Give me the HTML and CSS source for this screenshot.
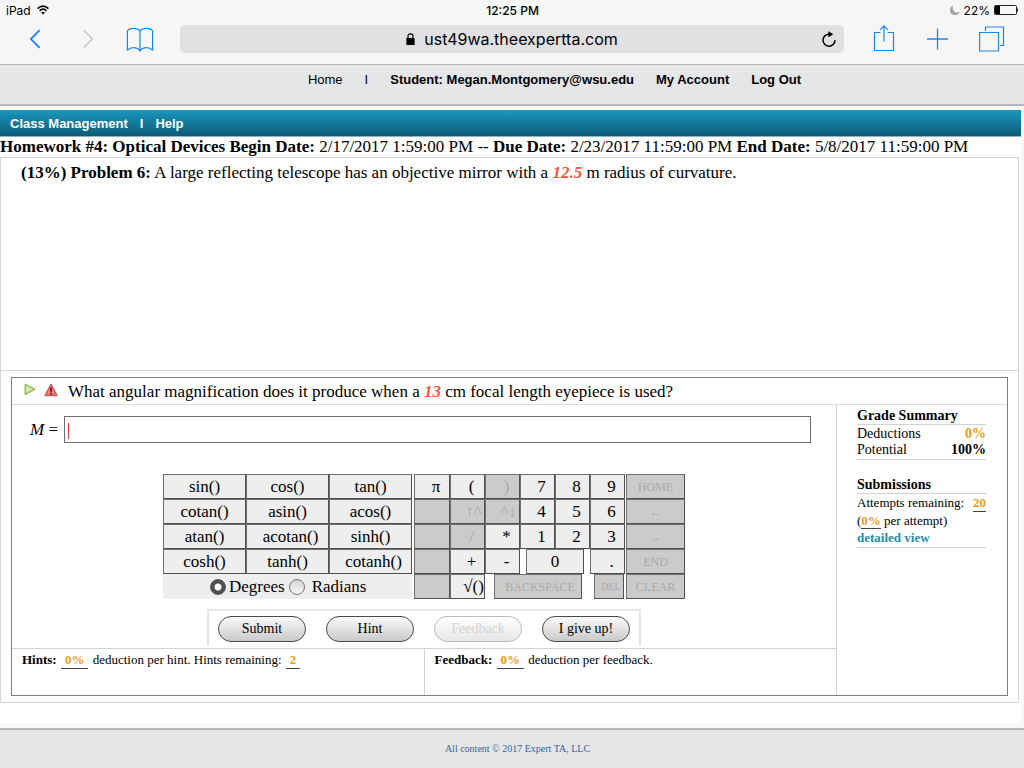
FILE: index.html
```html
<!DOCTYPE html>
<html lang="en">
<head>
    <meta charset="UTF-8">
    <meta name="viewport" content="width=device-width, initial-scale=1.0">
    <title>Expert TA - Homework #4</title>
    <link rel="stylesheet" href="styles.css">
</head>
<body>
    <div class="browser">
        <div class="status">
            <div class="status-left">
                <span>iPad</span>
                <svg width="12" height="10" viewBox="0 0 12 10" fill="none" stroke="#000" stroke-width="1.6">
                    <path d="M0.6 3.6 Q6 -1.4 11.4 3.6"/>
                    <path d="M2.6 5.8 Q6 2.6 9.4 5.8"/>
                    <path d="M6 9.6 L4 7.6 Q6 5.9 8 7.6 Z" fill="#000" stroke="none"/>
                </svg>
            </div>
            <div class="status-time">12:25 PM</div>
            <div class="status-right">
                <svg width="10" height="10" viewBox="0 0 10 10"><path d="M3.4 0.4 A5 5 0 1 0 9.6 6.8 A4.6 4.6 0 0 1 3.4 0.4 Z" fill="#a5a5a5"/></svg>
                <span>22%</span>
                <svg width="25" height="10" viewBox="0 0 25 10">
                    <rect x="0.5" y="0.5" width="22" height="9" rx="1" fill="none" stroke="#222"/>
                    <rect x="1" y="1" width="5" height="8" fill="#000"/>
                    <path d="M23 3 Q25 5 23 7 Z" fill="#000"/>
                </svg>
            </div>
        </div>
        <div class="toolbar">
            <div class="tools tools-left">
                <button type="button" aria-label="Back"><svg width="12" height="20" viewBox="0 0 12 20" fill="none" stroke="#0a7aff" stroke-width="1.7"><path d="M9.6 1.2 L0.9 10 L9.6 18.8"/></svg></button>
                <button type="button" aria-label="Forward"><svg width="12" height="20" viewBox="0 0 12 20" fill="none" stroke="#c6c6c8" stroke-width="1.5"><path d="M1.6 1.2 L10.4 10 L1.6 18.8"/></svg></button>
                <button type="button" aria-label="Bookmarks"><svg width="28" height="26" viewBox="0 0 28 26" fill="none" stroke="#1b85e8" stroke-width="1.2">
                    <path d="M14 5 Q12 2.4 7.5 2.4 Q3.4 2.4 1.4 4.6 V24 Q4 21.6 7.5 21.6 Q12 21.6 14 25 Q16 21.6 20.5 21.6 Q24 21.6 26.6 24 V4.6 Q24.6 2.4 20.5 2.4 Q16 2.4 14 5 V25"/>
                </svg></button>
            </div>
            <div class="address">
                <div class="url">
                    <svg width="9" height="12" viewBox="0 0 9 12"><rect x="0.4" y="5" width="8.2" height="7" rx="0.6" fill="#000"/><path d="M2 5.5 V3 Q2 0.8 4.5 0.8 Q7 0.8 7 3 V5.5" fill="none" stroke="#000" stroke-width="1.2"/></svg>
                    <span>ust49wa.theexpertta.com</span>
                </div>
                <button type="button" aria-label="Reload"><svg width="16" height="17" viewBox="0 0 16 17"><path d="M8.5 3.2 A6 6 0 1 0 14 9.2" fill="none" stroke="#000" stroke-width="1.5"/><path d="M7.4 0.2 L12.2 3.2 L7.4 6.2 Z" fill="#000"/></svg></button>
            </div>
            <div class="tools tools-right">
                <button type="button" aria-label="Share"><svg width="22" height="28" viewBox="0 0 22 28" fill="none" stroke="#1b85e8" stroke-width="1.2"><path d="M7.5 7.5 H1.5 V25.5 H20.5 V7.5 H14.5 M11 16.5 V0.9 M7 4.9 L11 0.9 L15 4.9"/></svg></button>
                <button type="button" aria-label="New tab"><svg width="22" height="22" viewBox="0 0 22 22" stroke="#1b85e8" stroke-width="1.3"><path d="M10.5 0.5 V21.5 M0 11 H21"/></svg></button>
                <button type="button" aria-label="Tabs"><svg width="26" height="26" viewBox="0 0 26 26" fill="none" stroke="#1b85e8" stroke-width="1.2"><path d="M0.6 6.5 H19.5 V25 H0.6 Z M6.5 5 V1 H24.5 V19.5 H21"/></svg></button>
            </div>
        </div>
    </div>

    <div class="top-links">
        <a href="#" class="plain">Home</a>
        <span class="plain">I</span>
        <a href="#">Student: Megan.Montgomery@wsu.edu</a>
        <a href="#">My Account</a>
        <a href="#">Log Out</a>
    </div>

    <div class="page">
        <div class="nav">
            <a href="#">Class Management</a>
            <span>I</span>
            <a href="#">Help</a>
        </div>
        <div class="homework">
            <b>Homework #4: Optical Devices</b>
            <b>Begin Date:</b> 2/17/2017 1:59:00 PM --
            <b>Due Date:</b> 2/23/2017 11:59:00 PM
            <b>End Date:</b> 5/8/2017 11:59:00 PM
        </div>

        <div class="assignment">
            <div class="statement">
                <b>(13%) Problem 6:</b> A large reflecting telescope has an objective mirror with a <em>12.5</em> m radius of curvature.
            </div>
            <div class="question">
                <div class="question-head">
                    <svg width="12" height="13" viewBox="0 0 12 13"><path d="M1.2 1.2 L10.8 6.2 L1.2 11.4 Z" fill="#d3e8a4" stroke="#8fb04a" stroke-width="1.2" stroke-linejoin="round"/></svg>
                    <svg width="14" height="14" viewBox="0 0 14 14"><path d="M7 1.4 L12.8 12.4 H1.2 Z" fill="#f08080" stroke="#d85c5c" stroke-width="1.6" stroke-linejoin="round"/><path d="M7 4.4 V8.8 M7 9.8 V11.4" stroke="#5a1010" stroke-width="1.6"/></svg>
                    <p>What angular magnification does it produce when a <em>13</em> cm focal length eyepiece is used?</p>
                </div>
                <div class="question-body">
                    <div class="work">
                        <div class="answer">
                            <label for="answer"><i>M</i> =</label>
                            <div class="field">
                                <input type="text" id="answer">
                                <span class="caret"></span>
                            </div>
                        </div>

                        <div class="keypad">
                            <div class="functions">
                                <button type="button">sin()</button>
                                <button type="button">cos()</button>
                                <button type="button">tan()</button>
                                <button type="button">cotan()</button>
                                <button type="button">asin()</button>
                                <button type="button">acos()</button>
                                <button type="button">atan()</button>
                                <button type="button" class="long">acotan()</button>
                                <button type="button">sinh()</button>
                                <button type="button">cosh()</button>
                                <button type="button">tanh()</button>
                                <button type="button" class="long">cotanh()</button>
                                <div class="mode">
                                    <input type="radio" name="mode" id="degrees" checked>
                                    <label for="degrees">Degrees</label>
                                    <input type="radio" name="mode" id="radians">
                                    <label for="radians">Radians</label>
                                </div>
                            </div>
                            <div class="numbers">
                                <div class="row">
                                    <button type="button">π</button>
                                    <button type="button">(</button>
                                    <button type="button" disabled>)</button>
                                    <button type="button">7</button>
                                    <button type="button">8</button>
                                    <button type="button">9</button>
                                    <button type="button" class="side-key" disabled>HOME</button>
                                </div>
                                <div class="row">
                                    <button type="button" aria-label="blank" disabled></button>
                                    <button type="button" class="wide-text" disabled>↑^</button>
                                    <button type="button" class="wide-text" disabled>^↓</button>
                                    <button type="button">4</button>
                                    <button type="button">5</button>
                                    <button type="button">6</button>
                                    <button type="button" class="side-key" disabled>←</button>
                                </div>
                                <div class="row">
                                    <button type="button" aria-label="blank" disabled></button>
                                    <button type="button" disabled>/</button>
                                    <button type="button">*</button>
                                    <button type="button">1</button>
                                    <button type="button">2</button>
                                    <button type="button">3</button>
                                    <button type="button" class="side-key" disabled>→</button>
                                </div>
                                <div class="row">
                                    <button type="button" aria-label="blank" disabled></button>
                                    <button type="button">+</button>
                                    <button type="button">-</button>
                                    <button type="button" class="zero">0</button>
                                    <button type="button">.</button>
                                    <button type="button" class="side-key" disabled>END</button>
                                </div>
                                <div class="row">
                                    <button type="button" aria-label="blank" disabled></button>
                                    <button type="button" class="root">√()</button>
                                    <button type="button" class="backspace" disabled>BACKSPACE</button>
                                    <button type="button" class="del" disabled>DEL</button>
                                    <button type="button" class="side-key" disabled>CLEAR</button>
                                </div>
                            </div>
                        </div>

                        <div class="actions">
                            <button type="button">Submit</button>
                            <button type="button">Hint</button>
                            <button type="button" disabled>Feedback</button>
                            <button type="button">I give up!</button>
                        </div>

                        <div class="notes">
                            <div class="note"><b>Hints:</b> <span class="value">0%</span> deduction per hint. Hints remaining: <span class="value">2</span></div>
                            <div class="note"><b>Feedback:</b> <span class="value">0%</span> deduction per feedback.</div>
                        </div>
                    </div>

                    <div class="summary">
                        <h3>Grade Summary</h3>
                        <div class="group">
                            <div class="line"><span>Deductions</span><b class="orange">0%</b></div>
                            <div class="line"><span>Potential</span><b>100%</b></div>
                        </div>
                        <h3>Submissions</h3>
                        <div class="group attempts">
                            <div class="line"><span>Attempts remaining:</span><b class="orange underlined">20</b></div>
                            <div>(<b class="orange underlined">0%</b> per attempt)</div>
                            <a href="#">detailed view</a>
                        </div>
                    </div>
                </div>
            </div>
        </div>
    </div>

    <div class="footer"><a href="#">All content © 2017 Expert TA, LLC</a></div>
</body>
</html>
```
FILE: styles.css
```css
* {
    box-sizing: border-box;
}
body {
    margin: 0;
    min-height: 100vh;
    display: flex;
    flex-direction: column;
    background-color: #f8f8f8;
    font-family: "Liberation Serif", "Times New Roman", serif;
    font-size: 17px;
    color: #000;
}
button, input {
    font-family: inherit;
    color: inherit;
    margin: 0;
}
a {
    color: inherit;
    text-decoration: none;
}
em {
    color: #f4553d;
    font-weight: bold;
}

/* browser bar */
.browser {
    background-color: #f6f6f6;
    border-bottom: 1px solid #b4b5b7;
    font-family: Inter, "Liberation Sans", sans-serif;
}
.status {
    height: 20px;
    padding: 0 5px 0 6px;
    display: flex;
    align-items: center;
    font-size: 12px;
}
.status-left, .status-right {
    flex: 1;
    display: flex;
    align-items: center;
    gap: 6px;
}
.status-right {
    justify-content: flex-end;
    gap: 4px;
}
.status-time {
    font-weight: 500;
}
.toolbar {
    height: 44px;
    padding-bottom: 6px;
    display: flex;
    align-items: center;
}
.toolbar button {
    border: none;
    background: none;
    padding: 0;
    display: flex;
    justify-content: center;
    align-items: center;
}
.tools {
    width: 180px;
    display: flex;
}
.tools-left {
    padding-left: 10px;
}
.tools-left button {
    width: 52px;
}
.tools-right {
    padding-right: 5px;
    justify-content: flex-end;
}
.tools-right button {
    width: 54px;
}
.address {
    flex: 1;
    height: 28px;
    padding: 0 7px 0 23px;
    border-radius: 5px;
    background-color: #e1e1e3;
    display: flex;
    align-items: center;
}
.url {
    flex: 1;
    display: flex;
    justify-content: center;
    align-items: center;
    gap: 9px;
    font-size: 16px;
}

/* page header */
.top-links {
    height: 41px;
    padding: 7px 0 0 85px;
    display: flex;
    justify-content: center;
    gap: 22px;
    background-color: #e5e6e8;
    border-bottom: 2px solid #b6b7b8;
    font-family: "Liberation Sans", Arial, sans-serif;
    font-size: 13px;
    font-weight: bold;
    line-height: 16px;
}
.top-links .plain {
    font-weight: normal;
}
.page {
    margin-right: 3px;
    padding-bottom: 20px;
    background-color: #fff;
    border-top: 4px solid #f8f8f8;
    border-bottom: 5px solid #f8f8f8;
}
.nav {
    height: 27px;
    padding: 0 10px;
    display: flex;
    align-items: center;
    gap: 12px;
    background: linear-gradient(#1a98bd, #0d5b75);
    border-bottom: 1px solid #8fb3bf;
    color: #fff;
    font-family: "Liberation Sans", Arial, sans-serif;
    font-size: 13px;
    font-weight: bold;
}
.homework {
    height: 20px;
    line-height: 20px;
    white-space: nowrap;
}
.assignment {
    margin-right: 2px;
    padding-bottom: 6px;
    border: 1px solid #d6d6d6;
}
.statement {
    min-height: 213px;
    padding: 5px 20px;
    line-height: 20px;
    border-bottom: 1px solid #d6d6d6;
}
.question {
    margin: 6px 10px 0;
    border: 1px solid #7d7d7d;
}
.question-head {
    height: 27px;
    padding: 0 12px;
    display: flex;
    gap: 8px;
    border-bottom: 1px solid #dedede;
}
.question-head svg {
    margin-top: 5px;
}
.question-head p {
    margin: 0 2px;
    line-height: 28px;
}
.question-body {
    display: flex;
}
.work {
    flex: 1;
    border-right: 1px solid #d2d2d2;
}
.answer {
    padding: 11px 25px 0 18px;
    display: flex;
    align-items: center;
    gap: 6px;
}
.field {
    flex: 1;
    position: relative;
}
.field input {
    display: block;
    width: 100%;
    height: 27px;
    padding: 0 6px;
    border: 1px solid #6f6f6f;
    font-size: 17px;
}
.caret {
    position: absolute;
    top: 7px;
    left: 4px;
    width: 1px;
    height: 16px;
    background-color: #e8383d;
}

/* keypad */
.keypad {
    margin-top: 31px;
    display: flex;
    justify-content: center;
    gap: 2px;
}
.keypad button {
    height: 25px;
    padding: 0;
    border: 1px solid #505050;
    border-top-color: #707070;
    border-left-color: #707070;
    border-radius: 0;
    background-color: #eee;
    font-size: 17px;
    line-height: 22px;
}
.keypad button:disabled {
    background-color: #cbcbcb;
    color: #a9a9a9;
}
.functions {
    display: grid;
    grid-template-columns: repeat(3, 83px);
}
.functions .long {
    padding-left: 6px;
}
.mode {
    grid-column: 1 / 4;
    height: 25px;
    padding-left: 47px;
    display: flex;
    align-items: center;
    background-color: #eee;
}
.mode input {
    appearance: none;
    width: 16px;
    height: 16px;
    margin-right: 3px;
    border: 1px solid #777;
    border-radius: 50%;
    background: linear-gradient(#d2d2d2, #fafafa);
}
.mode input:checked {
    background: radial-gradient(circle, #fff 3px, #505050 4px);
    border-color: #555;
}
.mode label {
    margin-right: 4px;
}
.mode input:last-of-type {
    margin-right: 7px;
}
.numbers {
    width: 271px;
}
.row {
    display: flex;
}
.row button {
    width: 35px;
    padding-left: 8px;
}
.row button:first-child {
    width: 36px;
}
.row .wide-text {
    padding-left: 12px;
}
.row .side-key {
    width: 59px;
    margin-left: auto;
    padding: 0;
    font-size: 12px;
}
.row .zero {
    width: 58px;
    margin: 0 6px;
    padding: 0;
}
.row .root {
    padding-left: 12px;
}
.row .backspace {
    width: 88px;
    margin-left: 9px;
    padding: 0 0 0 4px;
    font-size: 12px;
}
.row .del {
    width: 30px;
    margin-left: 12px;
    padding: 0 0 0 4px;
    font-size: 10px;
}

/* submit buttons */
.actions {
    width: 434px;
    height: 37px;
    margin: 10px auto 2px;
    padding: 5px 9px;
    display: flex;
    justify-content: space-between;
    border: solid #e6e6e6;
    border-width: 2px 2px 0;
}
.actions button {
    width: 88px;
    height: 26px;
    padding: 0;
    border: 1px solid #4a4a4a;
    border-radius: 13px;
    background: linear-gradient(#fafafa, #cacaca);
    font-size: 14px;
}
.actions button:disabled {
    border-color: #bbb;
    background: linear-gradient(#fff, #e6e6e6);
    color: #d2d2d2;
}
.notes {
    display: flex;
    border-top: 1px solid #d2d2d2;
    font-size: 13px;
    line-height: 16px;
}
.note {
    flex: 1;
    height: 46px;
    padding: 3px 10px;
}
.note + .note {
    border-left: 1px solid #d2d2d2;
}
.value {
    display: inline-block;
    margin: 0 1px;
    padding: 0 4px;
    border-bottom: 1px solid #444;
    color: #f39a14;
    font-weight: bold;
}

/* grade summary */
.summary {
    width: 170px;
    padding: 3px 21px 0 20px;
    font-size: 14px;
    line-height: 16px;
}
.summary h3 {
    margin: 0;
    font-size: 14px;
    border-bottom: 1px solid #d2d2d2;
}
.summary .group {
    margin-bottom: 17px;
    padding: 1px 0;
    border-bottom: 1px solid #d2d2d2;
}
.summary .attempts {
    font-size: 13px;
}
.attempts div {
    margin-bottom: 1px;
}
.line {
    display: flex;
    justify-content: space-between;
}
.orange {
    color: #f39a14;
}
.underlined {
    border-bottom: 1px solid #444;
}
.summary a {
    color: #1c8fae;
    font-weight: bold;
}

.footer {
    flex: 1;
    padding: 12px 0 12px 11px;
    background-color: #e5e6e8;
    border-top: 2px solid #b6b7b8;
    color: #33669c;
    font-size: 10px;
    line-height: 14px;
    text-align: center;
}
```
